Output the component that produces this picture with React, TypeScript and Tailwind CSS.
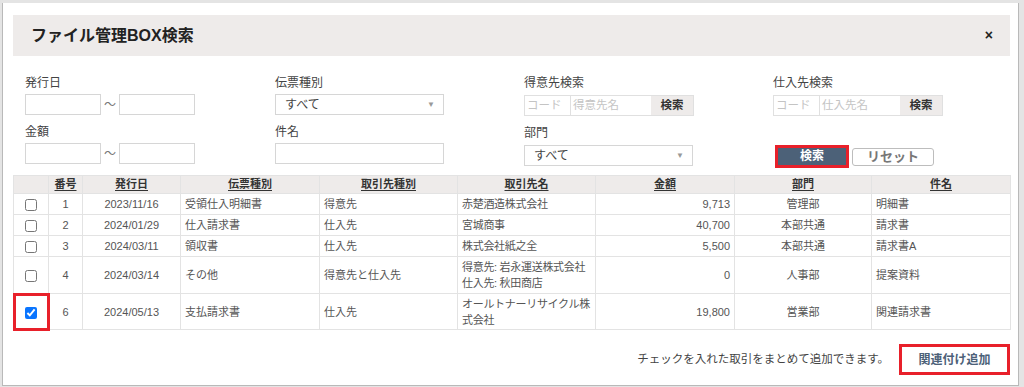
import type { ReactNode } from 'react';

const font = { fontFamily: '"Liberation Sans", "Noto Sans CJK JP", sans-serif' };

type Row = {
  no: number;
  date: string;
  slip: string;
  partnerType: string;
  partner: ReactNode;
  amount: string;
  dept: string;
  subject: string;
  checked?: boolean;
  h: string;
};

const rows: Row[] = [
  { no: 1, date: '2023/11/16', slip: '受領仕入明細書', partnerType: '得意先', partner: '赤楚酒造株式会社', amount: '9,713', dept: '管理部', subject: '明細書', h: 'h-[21px]' },
  { no: 2, date: '2024/01/29', slip: '仕入請求書', partnerType: '仕入先', partner: '宮城商事', amount: '40,700', dept: '本部共通', subject: '請求書', h: 'h-[21px]' },
  { no: 3, date: '2024/03/11', slip: '領収書', partnerType: '仕入先', partner: '株式会社紙之全', amount: '5,500', dept: '本部共通', subject: '請求書A', h: 'h-[21px]' },
  {
    no: 4,
    date: '2024/03/14',
    slip: 'その他',
    partnerType: '得意先と仕入先',
    partner: (
      <>
        得意先: 岩永運送株式会社
        <br />
        仕入先: 秋田商店
      </>
    ),
    amount: '0',
    dept: '人事部',
    subject: '提案資料',
    h: 'h-[37px]',
  },
  {
    no: 6,
    date: '2024/05/13',
    slip: '支払請求書',
    partnerType: '仕入先',
    partner: (
      <>
        オールトナーリサイクル株
        <br />
        式会社
      </>
    ),
    amount: '19,800',
    dept: '営業部',
    subject: '関連請求書',
    checked: true,
    h: 'h-[36px]',
  },
];

function Label({ children }: { children: ReactNode }) {
  return <div className="h-[14px] text-[12px] leading-[14px] text-[#444]">{children}</div>;
}

function Box({ w }: { w: string }) {
  return <div className={`${w} h-[21px] border border-[#d6d6d6] bg-white`} />;
}

function FakeSelect() {
  return (
    <div className="flex h-[21px] w-[169px] items-center justify-between border border-[#d6d6d6] bg-white pl-[9px] pr-[8px] text-[12px] text-[#444]">
      <span>すべて</span>
      <span className="text-[8px] text-[#999]">▼</span>
    </div>
  );
}

function PartnerSearch({ placeholder }: { placeholder: string }) {
  return (
    <div className="flex h-[21px] w-fit border border-[#e0e0e0] text-[11.5px]">
      <div className="flex w-[46px] items-center border-r border-[#e0e0e0] pl-[2px] text-[#c4c4c4]">コード</div>
      <div className="flex w-[80px] items-center pl-[2px] text-[#c4c4c4]">{placeholder}</div>
      <div className="flex w-[42px] items-center justify-center bg-[#eeebea] font-bold text-[#333]">検索</div>
    </div>
  );
}

export default function App() {
  const th = 'border border-[#e3e3e3] font-bold underline underline-offset-2 text-[#333] text-center';
  const td = 'border border-[#e3e3e3] px-[4px] whitespace-nowrap text-[#555]';
  return (
    <div style={font} className="h-[387px] w-[1024px] overflow-hidden bg-[#e4e4e4] pt-[3px] pl-[2px] pr-[5px] pb-[1px]">
      <div className="h-full border-x border-b border-[#b9b9b9] bg-white pt-[12px] pl-[10px] pr-[8px]">
        {/* header */}
        <div className="flex h-[41px] items-center justify-between bg-[#eeebea] pl-[18px] pr-[17px]">
          <div className="text-[16px] font-bold text-[#222]">ファイル管理BOX検索</div>
          <div className="text-[14px] font-bold text-[#222]">×</div>
        </div>

        {/* form */}
        <div className="grid grid-cols-[250px_249px_249px_1fr] gap-y-[9px] pl-[12px] pt-[20px]">
          <div>
            <Label>発行日</Label>
            <div className="mt-[4px] flex items-center">
              <Box w="w-[76px]" />
              <span className="w-[18px] text-center text-[12px] text-[#777]">～</span>
              <Box w="w-[76px]" />
            </div>
          </div>
          <div>
            <Label>伝票種別</Label>
            <div className="mt-[4px]">
              <FakeSelect />
            </div>
          </div>
          <div>
            <Label>得意先検索</Label>
            <div className="mt-[5px]">
              <PartnerSearch placeholder="得意先名" />
            </div>
          </div>
          <div>
            <Label>仕入先検索</Label>
            <div className="mt-[5px]">
              <PartnerSearch placeholder="仕入先名" />
            </div>
          </div>

          <div>
            <Label>金額</Label>
            <div className="mt-[4px] flex items-center">
              <Box w="w-[76px]" />
              <span className="w-[18px] text-center text-[12px] text-[#777]">～</span>
              <Box w="w-[76px]" />
            </div>
          </div>
          <div>
            <Label>件名</Label>
            <div className="mt-[4px]">
              <Box w="w-[169px]" />
            </div>
          </div>
          <div className="pt-[1px]">
            <Label>部門</Label>
            <div className="mt-[5px]">
              <FakeSelect />
            </div>
          </div>
          <div className="flex items-end gap-[6px] pl-[5px]">
            <button className="mb-[1px] h-[17px] w-[68px] bg-[#4c6178] text-[12px] font-bold leading-[17px] text-white outline-[3px] outline-[#e8202a] outline-solid">
              検索
            </button>
            <button className="h-[18px] w-[82px] rounded-[3px] border border-[#bdbdbd] bg-white text-[13px] font-bold leading-[16px] text-[#777]">
              リセット
            </button>
          </div>
        </div>

        {/* table */}
        <table className="mt-[9px] w-[997px] table-fixed border-collapse text-[11px]">
          <colgroup>
            <col className="w-[35px]" />
            <col className="w-[34px]" />
            <col className="w-[98px]" />
            <col className="w-[139px]" />
            <col className="w-[138px]" />
            <col className="w-[138px]" />
            <col className="w-[139px]" />
            <col className="w-[137px]" />
            <col className="w-[139px]" />
          </colgroup>
          <thead>
            <tr className="h-[18px] bg-[#eeebea]">
              <th className="border border-[#e3e3e3]" />
              <th className={th}>番号</th>
              <th className={th}>発行日</th>
              <th className={th}>伝票種別</th>
              <th className={th}>取引先種別</th>
              <th className={th}>取引先名</th>
              <th className={th}>金額</th>
              <th className={th}>部門</th>
              <th className={th}>件名</th>
            </tr>
          </thead>
          <tbody className="leading-[16px]">
            {rows.map((r) => (
              <tr key={r.no} className={r.h}>
                <td
                  className={`border border-[#e3e3e3] text-center ${
                    r.checked ? 'outline-[3px] outline-[#e8202a] -outline-offset-[2px] outline-solid' : ''
                  }`}
                >
                  <input
                    type="checkbox"
                    defaultChecked={r.checked}
                    className="m-0 h-[12px] w-[12px] align-middle accent-[#0a75ff]"
                  />
                </td>
                <td className={`${td} text-center`}>{r.no}</td>
                <td className={`${td} text-center`}>{r.date}</td>
                <td className={td}>{r.slip}</td>
                <td className={td}>{r.partnerType}</td>
                <td className={`${td} tracking-[-0.3px]`}>{r.partner}</td>
                <td className={`${td} text-right`}>{r.amount}</td>
                <td className={`${td} text-center`}>{r.dept}</td>
                <td className={td}>{r.subject}</td>
              </tr>
            ))}
          </tbody>
        </table>

        {/* footer */}
        <div className="mt-[14px] flex items-center justify-end gap-[10px]">
          <span className="text-[11.5px] text-[#444]">チェックを入れた取引をまとめて追加できます。</span>
          <div className="flex h-[31px] w-[111px] items-center justify-center border-[3px] border-[#e8202a] bg-white text-[12px] font-bold text-[#4c6178]">
            関連付け追加
          </div>
        </div>
      </div>
    </div>
  );
}
